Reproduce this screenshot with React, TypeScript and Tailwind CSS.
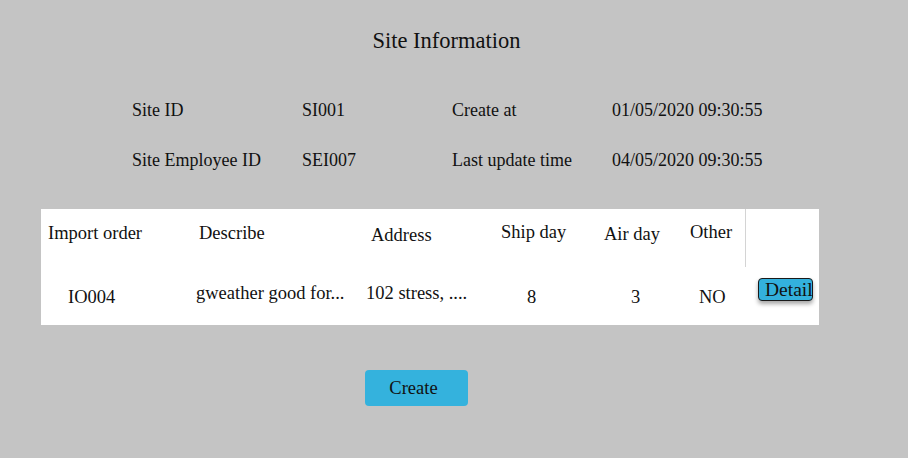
import React from "react";

const info = [
  ["Site ID", "SI001", "Create at", "01/05/2020 09:30:55"],
  ["Site Employee ID", "SEI007", "Last update time", "04/05/2020 09:30:55"],
];

const SiteInformation = () => {
  return (
    <div
      className="min-h-[458px] w-full bg-[#c4c4c4] text-[#111] pt-[27px]"
      style={{ fontFamily: '"Liberation Serif", serif' }}
    >
      <h1 className="text-center text-[22.5px] leading-[28px] pr-[15px]">
        Site Information
      </h1>

      <div className="ml-[132px] mt-[43px] grid grid-cols-[170px_150px_160px_auto] gap-y-[26px] text-[18px] leading-[24px]">
        {info.map((row, i) => (
          <React.Fragment key={i}>
            {row.map((cell, j) => (
              <div key={j}>{cell}</div>
            ))}
          </React.Fragment>
        ))}
      </div>

      <div className="ml-[41px] mt-[37px] w-[778px] bg-white text-[18.5px] leading-[24px]">
        <div className="grid grid-cols-[149px_170px_130px_95px_95px_66px_73px] h-[58px]">
          <div className="pl-[7px] pt-[12px]">Import order</div>
          <div className="pl-[9px] pt-[12px]">Describe</div>
          <div className="pl-[11px] pt-[14px]">Address</div>
          <div className="pl-[11px] pt-[11px]">Ship day</div>
          <div className="pl-[19px] pt-[13px]">Air day</div>
          <div className="pl-[10px] pt-[11px] border-r border-[#d4d4d4]">
            Other
          </div>
          <div />
        </div>
        <div className="grid grid-cols-[149px_170px_130px_95px_95px_66px_73px] h-[58px] items-center">
          <div className="pl-[27px] pt-[1px]">IO004</div>
          <div className="pl-[6px] pb-[6px]">gweather good for...</div>
          <div className="pl-[6px] pb-[6px]">102 stress, ....</div>
          <div className="pl-[37px] pt-[1px]">8</div>
          <div className="pl-[46px] pt-[1px]">3</div>
          <div className="pl-[19px] pt-[1px]">NO</div>
          <div className="pl-[12px] pb-[13px]">
            <button className="h-[23px] w-[55px] rounded-[4px] border border-[#1a1a1a] bg-[#33b1dd] pl-[6px] text-left text-[19.5px] leading-[20px] shadow-[0_3px_4px_rgba(0,0,0,0.35)]">
              Detail
            </button>
          </div>
        </div>
      </div>

      <button className="ml-[365px] mt-[45px] h-[36px] w-[103px] rounded-[4px] bg-[#34b2dd] pr-[6px] text-[18.5px] leading-[24px]">
        Create
      </button>
    </div>
  );
};

export default function App() {
  return <SiteInformation />;
}
